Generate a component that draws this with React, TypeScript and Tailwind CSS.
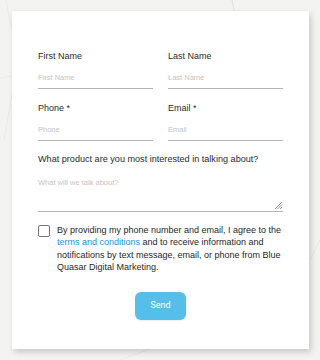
export default function App() {
  return (
    <div
      className="relative h-[360px] w-[320px] overflow-hidden bg-[#f3f3f2] pl-[12px] pt-[11px]"
      style={{ fontFamily: "'Liberation Sans', Arial, sans-serif" }}
    >
      <svg className="pointer-events-none absolute inset-0" width="320" height="360">
        <path d="M6 0 L18 60 L4 140" stroke="#e6e6e4" strokeWidth="0.8" fill="none" />
        <path d="M0 78 L12 76" stroke="#e8e8e6" strokeWidth="0.8" fill="none" />
        <path d="M232 0 L234 11" stroke="#dcdcda" strokeWidth="0.8" fill="none" />
        <path d="M310 260 L320 240" stroke="#e4e4e2" strokeWidth="0.8" fill="none" />
        <path d="M120 360 L150 349" stroke="#e6e6e4" strokeWidth="0.8" fill="none" />
      </svg>
      <div className="relative flex h-[338px] w-[297px] flex-col bg-white px-[26px] pt-[39px] shadow-[2px_3px_6px_rgba(0,0,0,0.18)]">
        <div className="grid grid-cols-2 gap-x-[15px] gap-y-[13px]">
          <Field label="First Name" placeholder="First Name" />
          <Field label="Last Name" placeholder="Last Name" />
          <Field label="Phone *" placeholder="Phone" />
          <Field label="Email *" placeholder="Email" />
        </div>
        <label className="mt-[12px] text-[9.1px] leading-[12px] text-[#2b2b2b]">
          What product are you most interested in talking about?
        </label>
        <div className="relative mt-[8px] h-[39px] border-b border-[#b5b5b5]">
          <span className="block pt-[4px] text-[7.5px] leading-[12px] text-[#c4c4c4]">
            What will we talk about?
          </span>
          <svg className="absolute bottom-[1px] right-[0px]" width="9" height="9" viewBox="0 0 9 9">
            <path d="M8 1 L1 8 M8 3.5 L3.5 8 M8 6 L6 8" stroke="#8a8a8a" strokeWidth="0.9" />
          </svg>
        </div>
        <div className="mt-[13px] flex gap-[7px]">
          <span className="h-[12px] w-[12px] shrink-0 rounded-[2px] border border-[#767676] bg-white" />
          <p className="mt-[-1px] text-[9px] leading-[12.4px] text-[#1f1f1f]">
            By providing my phone number and email, I agree to the{" "}
            <span className="text-[#1b8fe2]">terms and conditions</span> and to receive information and
            notifications by text message, email, or phone from Blue Quasar Digital Marketing.
          </p>
        </div>
        <div className="mt-[18px] flex justify-center">
          <button
            className="h-[28px] w-[51px] rounded-[6px] bg-[#55bee9] text-[9px] text-white shadow-[0_1px_2px_rgba(0,0,0,0.08)]"
            style={{ fontFamily: "Roboto, 'Liberation Sans', sans-serif" }}
          >
            Send
          </button>
        </div>
      </div>
    </div>
  );
}

function Field({ label, placeholder }: { label: string; placeholder: string }) {
  return (
    <div className="flex flex-col">
      <span className="text-[9px] leading-[12px] text-[#2b2b2b]">{label}</span>
      <div className="mt-[5px] flex h-[22px] items-center border-b border-[#b5b5b5]">
        <span className="text-[7.5px] leading-[12px] text-[#c4c4c4]">{placeholder}</span>
      </div>
    </div>
  );
}
